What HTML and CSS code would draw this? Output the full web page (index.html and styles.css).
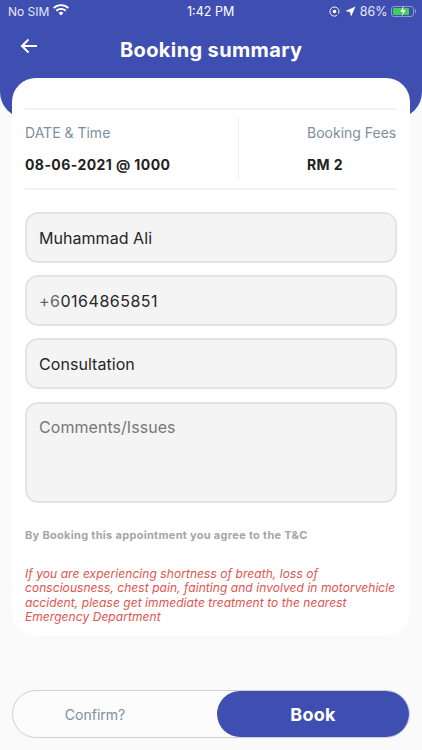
FILE: index.html
```html
<!DOCTYPE html>
<html lang="en">
<head>
<meta charset="utf-8">
<title>Booking summary</title>
<link rel="stylesheet" href="styles.css">
</head>
<body>
<div class="app">
  <header class="header">
    <div class="status">
      <div class="status-left">
        <span>No SIM</span>
        <svg class="wifi" viewBox="0 0 16 12" width="16" height="12"><path d="M8 11.5 5.6 9a3.4 3.4 0 0 1 4.8 0Z M3.9 7.4 2.7 6.1a7.6 7.6 0 0 1 10.6 0l-1.2 1.3a5.8 5.8 0 0 0-8.2 0Z M1.3 4.8 0 3.5a11.3 11.3 0 0 1 16 0l-1.3 1.3a9.5 9.5 0 0 0-13.4 0Z" fill="#fff"/></svg>
      </div>
      <span class="status-time">1:42 PM</span>
      <div class="status-right">
        <svg class="icon-lock" viewBox="0 0 12 12" width="11" height="11"><path d="M8.8 10.2A5 5 0 1 1 10.4 8.4" fill="none" stroke="#fff" stroke-width="1"/><circle cx="6" cy="6" r="2" fill="#fff"/></svg>
        <svg class="icon-loc" viewBox="0 0 12 12" width="11" height="11"><path d="M11.5.5 6.6 11.5 5.4 6.6.5 5.4Z" fill="#fff"/></svg>
        <span class="battery-pct">86%</span>
        <div class="battery"><div class="battery-body"><div class="battery-level"></div><svg class="bolt" viewBox="0 0 8 12" width="8" height="12"><path d="M5 0 .8 7h2.6L2.6 12 7.2 4.8H4.4Z" fill="#fff" stroke="#2f8a4a" stroke-width=".4"/></svg></div><div class="battery-cap"></div></div>
      </div>
    </div>
    <div class="titlebar">
      <svg class="back" viewBox="0 0 18 16" width="18" height="16"><path d="M17 8H2M8.5 1.5 2 8l6.5 6.5" fill="none" stroke="#fff" stroke-width="2"/></svg>
      <h1 class="title">Booking summary</h1>
    </div>
  </header>

  <main class="card">
    <div class="info">
      <div class="info-col">
        <div class="info-label">DATE &amp; Time</div>
        <div class="info-value">08-06-2021 @ 1000</div>
      </div>
      <div class="info-col info-col-fees">
        <div class="info-label">Booking Fees</div>
        <div class="info-value">RM 2</div>
      </div>
    </div>
    <div class="fields">
      <div class="field">Muhammad Ali</div>
      <div class="field field-phone"><span class="prefix">+6</span>0164865851</div>
      <div class="field">Consultation</div>
      <div class="field field-area">Comments/Issues</div>
    </div>
    <p class="terms">By Booking this appointment you agree to the T&amp;C</p>
    <p class="warning">If you are experiencing shortness of breath, loss of consciousness, chest pain, fainting and involved in motorvehicle accident, please get immediate treatment to the nearest Emergency Department</p>
  </main>

  <div class="actions">
    <div class="confirm">Confirm?</div>
    <div class="book">Book</div>
  </div>
</div>
</body>
</html>
```

FILE: styles.css
```css
* { box-sizing: border-box; }
html, body { margin: 0; padding: 0; }
body { background: #fafafa; font-family: Inter, "Liberation Sans", sans-serif; color: #222; }
.app { width: 422px; height: 750px; overflow: hidden; display: flex; flex-direction: column; }

.header { height: 118px; background: #3f4fb1; border-radius: 0 0 26px 26px; color: #fff; flex: none; }
.status { height: 22px; padding: 0 6px 0 8px; display: flex; align-items: center; justify-content: space-between; font-size: 12px; color: #e6e8f6; position: relative; }
.status-left { display: flex; align-items: center; gap: 4px; }
.wifi { margin-top: -3px; }
.status-time { position: absolute; left: 187px; font-size: 12.5px; color: #fff; }
.status-right { display: flex; align-items: center; }
.icon-loc { margin-left: 5px; }
.battery-pct { margin-left: 4px; font-size: 12.5px; }
.battery { display: flex; align-items: center; margin-left: 3px; }
.battery-body { width: 23px; height: 11px; border: 1px solid #8f9ad0; border-radius: 3px; padding: 1px; position: relative; display: flex; align-items: stretch; justify-content: center; }
.battery-level { width: 86%; background: #3ecf5a; border-radius: 1px; margin-right: auto; }
.bolt { position: absolute; left: 7px; top: -2px; }
.battery-cap { width: 1.5px; height: 4px; background: #8f9ad0; margin-left: 1px; }

.titlebar { display: flex; align-items: center; padding: 11px 0 0 20px; }
.back { flex: none; margin-top: -9px; }
.title { margin: 0 0 0 82px; font-size: 20px; letter-spacing: .37px; font-weight: 700; line-height: 34px; color: #fff; white-space: nowrap; }

.card { flex: none; width: 398px; height: 558px; margin: -40px 12px 0; padding: 30px 13px 0; background: #fff; border-radius: 24px; position: relative; }
.info { display: flex; height: 82px; border-top: 2px solid #f2f2f3; border-bottom: 2px solid #f2f2f3; padding: 8px 0 8px; }
.info-col { flex: 0 0 214px; border-right: 1px solid #efefef; padding-top: 6px; }
.info-col-fees { flex: 1; border-right: 0; padding-left: 68px; }
.info-label { font-size: 14px; line-height: 17px; color: #7d8f9c; white-space: nowrap; }
.info-value { margin-top: 15px; font-size: 14px; letter-spacing: .42px; line-height: 17px; font-weight: 700; color: #222; white-space: nowrap; }

.fields { margin-top: 22px; display: flex; flex-direction: column; gap: 12px; }
.field { height: 51px; padding: 0 12px; display: flex; align-items: center; background: #f4f4f4; border: 2px solid #e3e3e3; border-radius: 13px; font-size: 16px; letter-spacing: .05px; color: #262626; }
.field-phone { letter-spacing: .5px; }
.prefix { color: #666; }
.field-area { height: 101px; padding-top: 13px; align-items: flex-start; color: #777; margin-top: 1px; }

.terms { margin: 26px 0 0; font-size: 11px; letter-spacing: .3px; line-height: 13px; font-weight: 700; color: #a6a6a6; }
.warning { margin: 25px 0 0; font-size: 12px; letter-spacing: .06px; line-height: 14.4px; font-style: italic; color: #e2534d; }

.actions { flex: none; margin: 54px 12px 0; height: 48px; display: flex; border: 1px solid #cfcfcf; border-radius: 24px; background: #fcfcfc; position: relative; }
.confirm { width: 204px; padding-right: 40px; display: flex; align-items: center; justify-content: center; font-size: 14px; color: #7d8f9c; }
.book { flex: 1; display: flex; align-items: center; justify-content: center; background: #3f4fb1; border-radius: 23px; color: #fff; font-size: 18px; letter-spacing: .25px; font-weight: 700; }
```
